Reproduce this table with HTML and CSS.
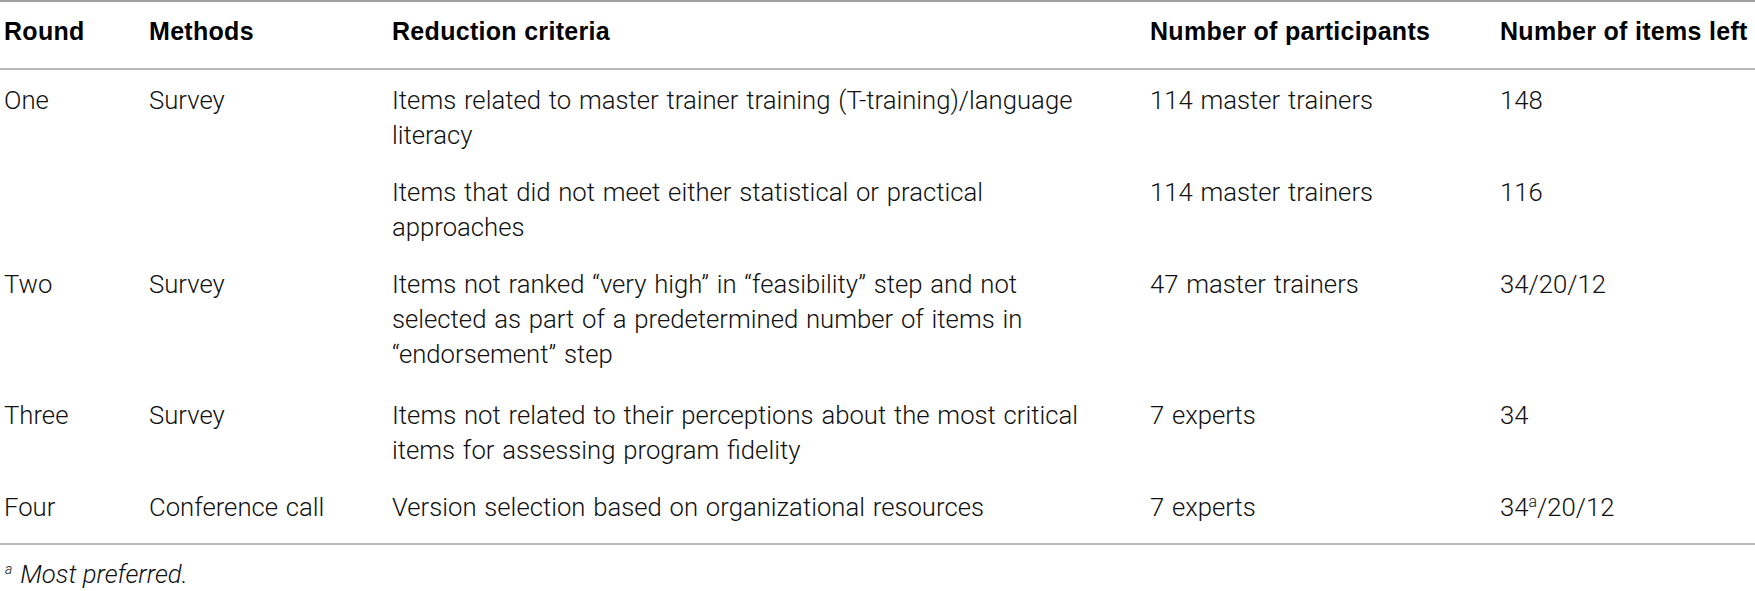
FILE: index.html
```html
<!DOCTYPE html>
<html lang="en">
<head>
<meta charset="utf-8">
<title>Item reduction rounds</title>
<link rel="stylesheet" href="styles.css">
</head>
<body>
<div class="wrap">
<table class="data">
  <thead>
    <tr>
      <th class="c1">Round</th>
      <th class="c2">Methods</th>
      <th class="c3">Reduction criteria</th>
      <th class="c4">Number of participants</th>
      <th class="c5">Number of items left</th>
    </tr>
  </thead>
  <tbody>
    <tr class="first">
      <td>One</td>
      <td>Survey</td>
      <td><div class="crit">Items related to master trainer training (T-training)/language literacy</div></td>
      <td>114 master trainers</td>
      <td>148</td>
    </tr>
    <tr>
      <td></td>
      <td></td>
      <td><div class="crit">Items that did not meet either statistical or practical approaches</div></td>
      <td>114 master trainers</td>
      <td>116</td>
    </tr>
    <tr>
      <td>Two</td>
      <td>Survey</td>
      <td><div class="crit">Items not ranked “very high” in “feasibility” step and not selected as part of a predetermined number of items in “endorsement” step</div></td>
      <td>47 master trainers</td>
      <td>34/20/12</td>
    </tr>
    <tr class="three">
      <td>Three</td>
      <td>Survey</td>
      <td><div class="crit">Items not related to their perceptions about the most critical items for assessing program fidelity</div></td>
      <td>7 experts</td>
      <td>34</td>
    </tr>
    <tr class="last">
      <td>Four</td>
      <td>Conference call</td>
      <td><div class="crit">Version selection based on organizational resources</div></td>
      <td>7 experts</td>
      <td>34<sup class="sup">a</sup>/20/12</td>
    </tr>
  </tbody>
</table>
<p class="note"><sup class="nsup">a</sup>Most preferred.</p>
</div>
</body>
</html>
```

FILE: styles.css
```css
html, body {
  margin: 0;
  padding: 0;
  background: #ffffff;
}
body {
  color: #111111;
  font-family: Roboto, "Liberation Sans", sans-serif;
  font-weight: 300;
}
.wrap {
  width: 1755px;
}
.data {
  width: 1755px;
  border-collapse: collapse;
  table-layout: fixed;
  border-top: 2px solid #a0a0a0;
  border-bottom: 2px solid #b8b8b8;
}
.data th {
  font-family: "Liberation Sans", Arial, sans-serif;
  font-weight: 700;
  font-size: 25px;
  letter-spacing: 0.3px;
  line-height: 35px;
  text-align: left;
  color: #000;
  padding: 12px 0 19px 4px;
  border-bottom: 2px solid #b8b8b8;
  white-space: nowrap;
  vertical-align: top;
}
.c1 { width: 141px; }
.c2 { width: 239px; }
.c3 { width: 754px; }
.c4 { width: 346px; }
.c5 { width: auto; }
.data td {
  font-size: 25.7px;
  line-height: 35px;
  word-spacing: 1.5px;
  padding: 11px 0 11px 4px;
  vertical-align: top;
  color: #111;
}
.crit {
  width: 700px;
}
.data tr.first td {
  padding-top: 13px;
}
.data tr.three td {
  padding-top: 15px;
}
.data tr.last td {
  padding-bottom: 18px;
}
.sup {
  font-size: 16px;
  line-height: 0;
  vertical-align: 9px;
}
.note {
  margin: 0;
  padding: 12px 0 0 5px;
  font-size: 25.7px;
  line-height: 35px;
  font-style: italic;
  font-weight: 300;
}
.nsup {
  font-size: 14px;
  line-height: 0;
  vertical-align: 9px;
  margin-right: 8px;
}
```
